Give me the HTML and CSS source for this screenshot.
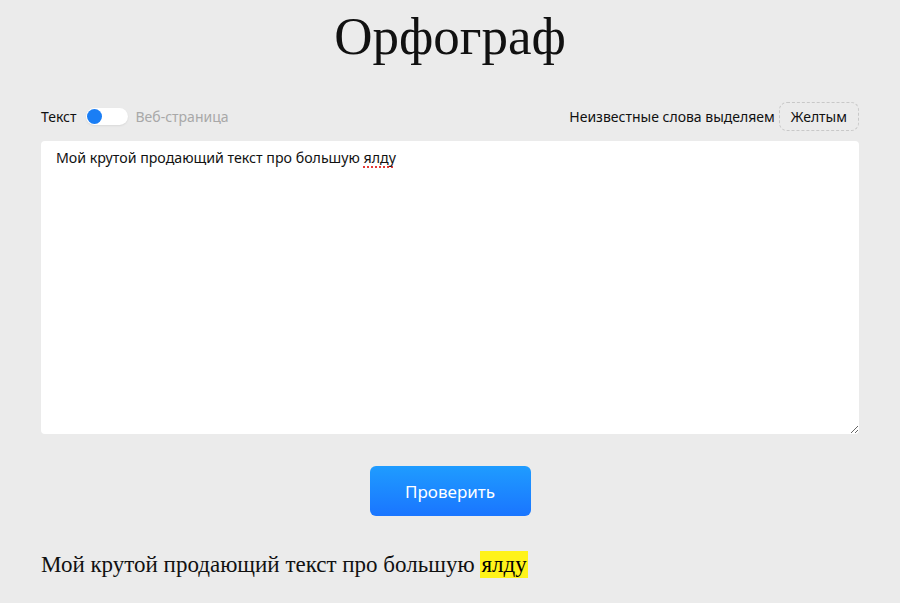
FILE: index.html
```html
<!DOCTYPE html>
<html lang="ru">
<head>
  <meta charset="UTF-8">
  <title>Орфограф</title>
  <link rel="stylesheet" href="styles.css">
</head>
<body>

  <main class="page">
    <h1 class="title">Орфограф</h1>

    <div class="controls">
      <div class="mode">
        <span>Текст</span>
        <label class="switch">
          <input type="checkbox">
          <span class="knob"></span>
        </label>
        <span class="muted">Веб-страница</span>
      </div>
      <div class="color-pick">
        <span>Неизвестные слова выделяем</span>
        <button class="color-btn">Желтым</button>
      </div>
    </div>

    <div class="editor" contenteditable="true" spellcheck="false">Мой крутой продающий текст про большую <span class="typo">ялду</span></div>

    <div class="actions">
      <button class="check-btn">Проверить</button>
    </div>

    <p class="result">Мой крутой продающий текст про большую <mark>ялду</mark></p>
  </main>

</body>
</html>
```

FILE: styles.css
```css
body {
  margin: 0;
  background: #ebebeb;
  font-family: "Noto Sans", "Open Sans", sans-serif;
  color: #111;
}

.page {
  max-width: 818px;
  margin: 0 auto;
}

.title {
  margin: 0;
  padding-top: 8px;
  text-align: center;
  font-family: "Liberation Serif", serif;
  font-weight: normal;
  font-size: 53px;
  line-height: 56px;
}

.controls {
  display: flex;
  justify-content: space-between;
  align-items: center;
  margin-top: 38px;
  font-size: 14px;
}

.mode, .color-pick {
  display: flex;
  align-items: center;
}

.switch {
  position: relative;
  width: 42px;
  height: 17px;
  margin: 0 8px 0 9px;
  background: #fff;
  border-radius: 9px;
  box-shadow: 0 1px 2px rgba(0, 0, 0, 0.08);
}

.switch input {
  display: none;
}

.knob {
  position: absolute;
  top: 1px;
  left: 1px;
  width: 15px;
  height: 15px;
  border-radius: 50%;
  background: #1a7ef5;
}

.muted {
  color: #a8a8a8;
}

.color-btn {
  margin-left: 4px;
  padding: 4px 11px;
  font-family: inherit;
  font-size: 14px;
  color: #111;
  background: transparent;
  border: 1px dashed #c8c8c8;
  border-radius: 8px;
  cursor: pointer;
}

.editor {
  margin-top: 10px;
  height: 283px;
  padding: 5px 15px;
  background: #fff;
  border-radius: 4px;
  font-size: 14.2px;
  line-height: 24px;
  overflow: auto;
  resize: vertical;
  outline: none;
}

.typo {
  text-decoration: underline dotted #e53935;
  text-decoration-thickness: 1.5px;
  text-underline-offset: 3px;
}

.actions {
  display: flex;
  justify-content: center;
  margin-top: 32px;
}

.check-btn {
  width: 161px;
  height: 50px;
  font-family: inherit;
  font-size: 17px;
  color: #fff;
  background: linear-gradient(#1f9cff, #1a75ff);
  border: none;
  border-radius: 6px;
  cursor: pointer;
}

.result {
  margin: 36px 0 0;
  font-family: "Liberation Serif", serif;
  font-size: 23px;
}

.result mark {
  background: #fff31a;
  padding: 1px 1px 2px;
}
```
